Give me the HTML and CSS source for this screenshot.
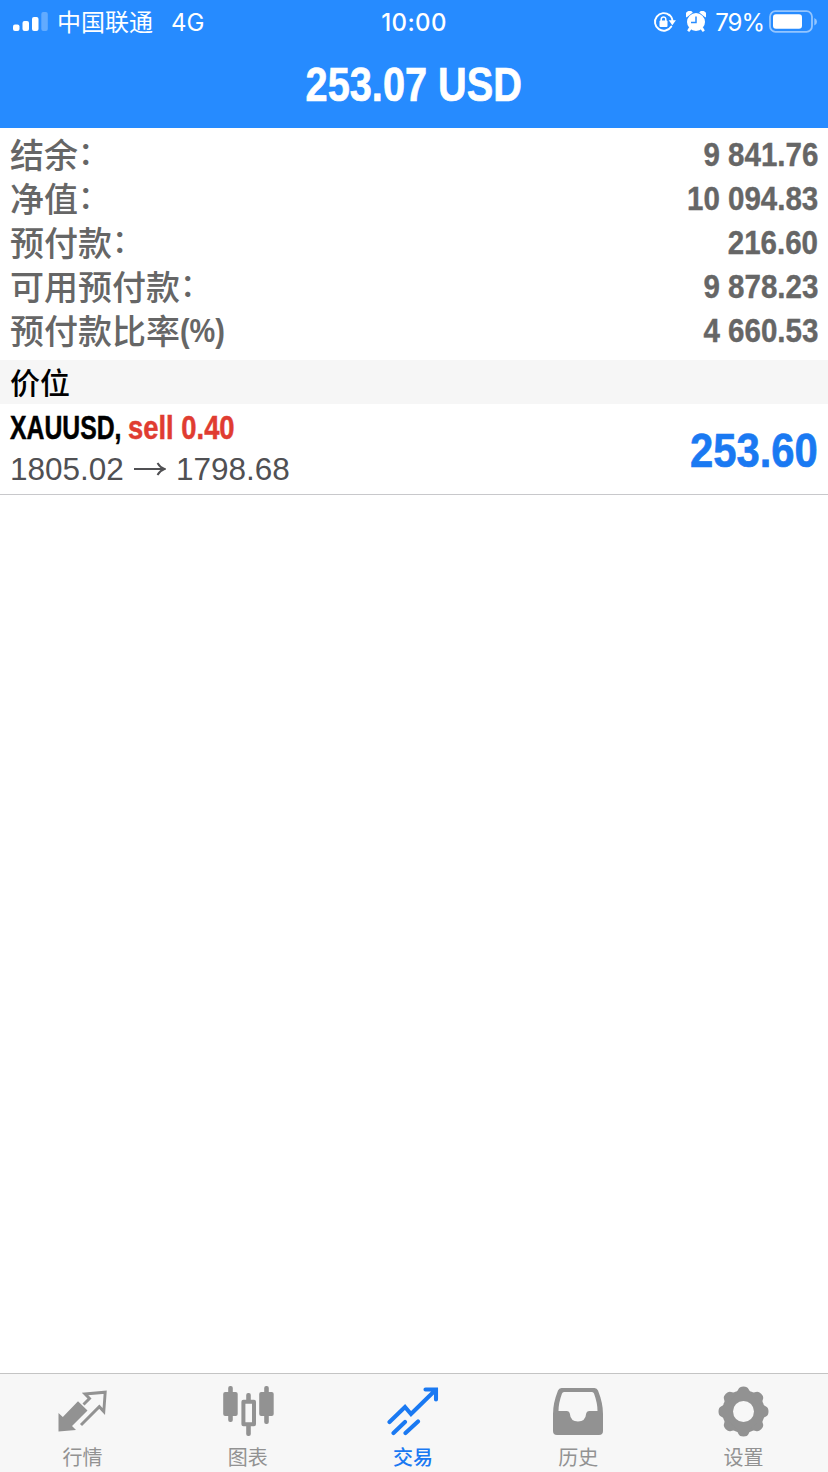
FILE: index.html
```html
<!DOCTYPE html>
<html lang="zh-CN">
<head>
<meta charset="utf-8">
<title>交易</title>
<link rel="stylesheet" href="styles.css">
</head>
<body>
<div class="app">
  <header class="top">
    <div class="status">
      <div class="status-left">
        <svg class="signal" width="36" height="20" viewBox="0 0 36 20"><g fill="#fff"><rect x="0" y="12.500" width="6.500" height="6.500" rx="2"/><rect x="9.500" y="9" width="6.500" height="10" rx="2"/><rect x="19" y="5" width="6.500" height="14" rx="2"/><rect x="28.300" y="0" width="6.500" height="19" rx="2" opacity=".28"/></g></svg>
        <span class="carrier">中国联通</span>
        <span class="network">4G</span>
      </div>
      <span class="clock">10:00</span>
      <div class="status-right">
        <svg class="lock" width="24" height="22" viewBox="0 0 24 22"><path d="M16.500 4.200A8.800 8.800 0 1 0 18.300 15.500" fill="none" stroke="#fff" stroke-width="1.900" stroke-linecap="round"/><path d="M15.500 3.200Q19.300 5.500 19.400 10" fill="none" stroke="#fff" stroke-width="1.900"/><path d="M15.700 9.200h7.200l-3.600 5z" fill="#fff"/><rect x="6.500" y="9.500" width="8" height="6.500" rx="1" fill="#fff"/><path d="M8.200 10V8.200a2.300 2.300 0 0 1 4.600 0V10" fill="none" stroke="#fff" stroke-width="1.500"/></svg>
        <svg class="alarm" width="20" height="22" viewBox="0 0 20 22"><g fill="#fff"><circle cx="10" cy="11" r="9"/><path d="M.5 6.500A4 4 0 0 1 6.800 1.500zM19.500 6.500A4 4 0 0 0 13.200 1.500z"/><path d="M3.200 16l2.200 2.200-2.200 2.900-2-1.500zM16.800 16l-2.200 2.200 2.200 2.900 2-1.500z"/></g><path d="M10 5.500V11.500H5" fill="none" stroke="#268bff" stroke-width="1.500"/></svg>
        <span class="percent">79%</span>
        <svg class="battery" width="48" height="24" viewBox="0 0 48 24"><rect x="1" y="1.200" width="42" height="20.600" rx="5.500" fill="none" stroke="#fff" stroke-opacity=".5" stroke-width="1.800"/><rect x="4" y="4.200" width="29" height="14.600" rx="3" fill="#fff"/><path d="M45.300 8q2.700 1.200 2.700 3.700t-2.700 3.700z" fill="#fff" opacity=".5"/></svg>
      </div>
    </div>
    <h1 class="title"><span class="cond">253.07 USD</span></h1>
  </header>
  <main class="content">
    <dl class="summary">
      <div class="line"><dt>结余<span class="colon">：</span></dt><dd>9 841.76</dd></div>
      <div class="line"><dt>净值<span class="colon">：</span></dt><dd>10 094.83</dd></div>
      <div class="line"><dt>预付款<span class="colon">：</span></dt><dd>216.60</dd></div>
      <div class="line"><dt>可用预付款<span class="colon">：</span></dt><dd>9 878.23</dd></div>
      <div class="line"><dt>预付款比率<span class="unit">(%)</span></dt><dd>4 660.53</dd></div>
    </dl>
    <h2 class="section">价位</h2>
    <article class="position">
      <div class="deal">
        <div class="symbol-row"><span class="symbol">XAUUSD,</span><span class="side">sell 0.40</span></div>
        <div class="prices"><span>1805.02</span><svg width="32" height="16" viewBox="0 0 32 16"><path d="M0 8H30M23.500 2Q26 6.500 30.500 8Q26 9.500 23.500 14" fill="none" stroke="#505053" stroke-width="1.900"/></svg><span>1798.68</span></div>
      </div>
      <span class="profit">253.60</span>
    </article>
  </main>
  <nav class="tabs">
    <a class="tab"><svg width="52" height="52" viewBox="0 0 52 52"><path d="M1.500 27L5.800 31 21 15.200 30.500 24.500 15 40 19 44 1.500 45.500z" fill="#929292"/><path d="M26.500 18.500L32.500 12.500 28 8 48.200 6.200 46.800 25.500 42.300 20.700 24 39" fill="none" stroke="#929292" stroke-width="2.900"/></svg><span>行情</span></a>
    <a class="tab"><svg width="52" height="52" viewBox="0 0 52 52"><g fill="#929292"><rect x="6.200" y="0" width="4.600" height="36" rx="2"/><rect x="1.200" y="6" width="14.500" height="24" rx="2"/><rect x="42.200" y="0" width="4.600" height="38" rx="2"/><rect x="37.200" y="6" width="14.500" height="24" rx="2"/><rect x="24.200" y="7" width="4.600" height="12" rx="2"/><rect x="24.200" y="36" width="4.600" height="14" rx="2"/></g><rect x="21.400" y="15.700" width="10.600" height="22.500" fill="#f7f7f7" stroke="#929292" stroke-width="4" stroke-linejoin="round"/></svg><span>图表</span></a>
    <a class="tab active"><svg width="52" height="52" viewBox="0 0 52 52"><path d="M2.500 36L18 21 24 28 48 4.500M38.500 3.500H49V13.500M6.500 47L18 36M18.500 47L31 35.500" fill="none" stroke="#1a79f2" stroke-width="4.100" stroke-linecap="round"/></svg><span>交易</span></a>
    <a class="tab"><svg width="52" height="52" viewBox="0 0 52 52"><path fill="#929292" fill-rule="evenodd" d="M9.500 2H42.500Q45 2 46 4.500Q51 17 51 28V45Q51 49 47 49H5Q1 49 1 45V28Q1 17 6 4.500Q7 2 9.500 2zM12 6Q10.500 6 10 7.500Q6.500 17 6.500 25H15Q17.500 25 17.800 27.500Q18.500 35.500 26 35.500T34.200 27.500Q34.500 25 37 25H45.500Q45.500 17 42 7.500Q41.500 6 40 6z"/></svg><span>历史</span></a>
    <a class="tab"><svg width="52" height="52" viewBox="0 0 52 52"><g fill="#929292"><circle cx="26.500" cy="25.500" r="21.300"/><path id="tooth" d="M17.500 8Q20.500 5.500 21.500 3Q22.500 .5 26.500 .5T31.500 3Q32.500 5.500 35.500 8z"/><use href="#tooth" transform="rotate(45 26.500 25.500)"/><use href="#tooth" transform="rotate(90 26.500 25.500)"/><use href="#tooth" transform="rotate(135 26.500 25.500)"/><use href="#tooth" transform="rotate(180 26.500 25.500)"/><use href="#tooth" transform="rotate(225 26.500 25.500)"/><use href="#tooth" transform="rotate(270 26.500 25.500)"/><use href="#tooth" transform="rotate(315 26.500 25.500)"/></g><circle cx="26.500" cy="25.500" r="10.500" fill="#f7f7f7"/></svg><span>设置</span></a>
  </nav>
</div>
</body>
</html>
```
FILE: styles.css
```css
* { box-sizing: border-box; margin: 0; padding: 0; }
body { background: #fff; font-family: "Liberation Sans", "Noto Sans CJK SC", sans-serif; }
.app { display: flex; flex-direction: column; width: 828px; height: 1472px; overflow: hidden; }

.top { height: 128px; background: #268bff; color: #fff; flex: none; }
.status { display: grid; grid-template-columns: 1fr auto 1fr; align-items: center; height: 42px; padding: 0 13px 0 13px; font-family: Inter, "Noto Sans CJK SC", sans-serif; font-size: 24px; line-height: 42px; }
.status-left, .status-right { display: flex; align-items: center; }
.status-right { justify-content: flex-end; margin-right: -2px; }
.status svg { display: block; }
.carrier { margin-left: 8px; padding-top: 2px; }
.network { margin-left: 18px; padding-top: 1px; }
.clock { padding-top: 1px; font-weight: 500; font-size: 24px; letter-spacing: .4px; }
.alarm { margin-left: 9px; }
.percent { margin: 0 5px 0 9px; padding-top: 1px; letter-spacing: -1px; }
.title { height: 86px; text-align: center; font-size: 48px; line-height: 86px; }
.cond { display: inline-block; transform: scaleX(.827); -webkit-text-stroke: .7px; }

.content { flex: 1; }
.summary { padding: 4px 10px 8px; height: 232px; color: #666; font-size: 34px; }
.line { display: flex; justify-content: space-between; height: 44px; line-height: 44px; white-space: nowrap; }
.line dt { font-family: "Noto Sans CJK SC", sans-serif; font-weight: 500; line-height: 44px; }
.line dd { font-weight: 700; transform: scaleX(.868); transform-origin: right; -webkit-text-stroke: .4px; }
.colon { font-size: 31px; line-height: 1; vertical-align: 4px; }
.unit { display: inline-block; font-family: "Liberation Sans", sans-serif; font-weight: 700; line-height: 1; vertical-align: 2px; transform: scaleX(.85); transform-origin: left; }
.section { height: 44px; padding-left: 10px; background: #f6f6f6; color: #000; font: 500 30px/42px "Noto Sans CJK SC", sans-serif; }
.position { display: flex; justify-content: space-between; align-items: center; height: 91px; padding: 0 10px; border-bottom: 1px solid #c8c8cb; }
.deal { padding-bottom: 4px; }
.symbol-row { display: flex; height: 43px; line-height: 44px; font-size: 33px; font-weight: 700; white-space: nowrap; -webkit-text-stroke: .5px; }
.symbol { width: 118px; color: #000; transform: scaleX(.75); transform-origin: left; }
.side { color: #e03c31; transform: scaleX(.83); transform-origin: left; }
.prices { display: flex; align-items: center; gap: 10px; height: 40px; color: #505053; font-size: 31.500px; line-height: 40px; }
.profit { padding-top: 2px; color: #1a79f2; font-size: 48px; font-weight: 700; transform: scaleX(.87); transform-origin: right; -webkit-text-stroke: .7px; }

.tabs { display: grid; grid-template-columns: repeat(5, 1fr); height: 99px; padding-right: 2px; flex: none; background: #f7f7f7; border-top: 1px solid #c4c4c4; }
.tab { display: flex; flex-direction: column; align-items: center; padding-top: 12px; color: #929292; font: 400 20px/30px "Noto Sans CJK SC", sans-serif; }
.tab svg { display: block; }
.tab span { margin-top: 4px; }
.tab.active { color: #1a79f2; font-weight: 500; }
```
